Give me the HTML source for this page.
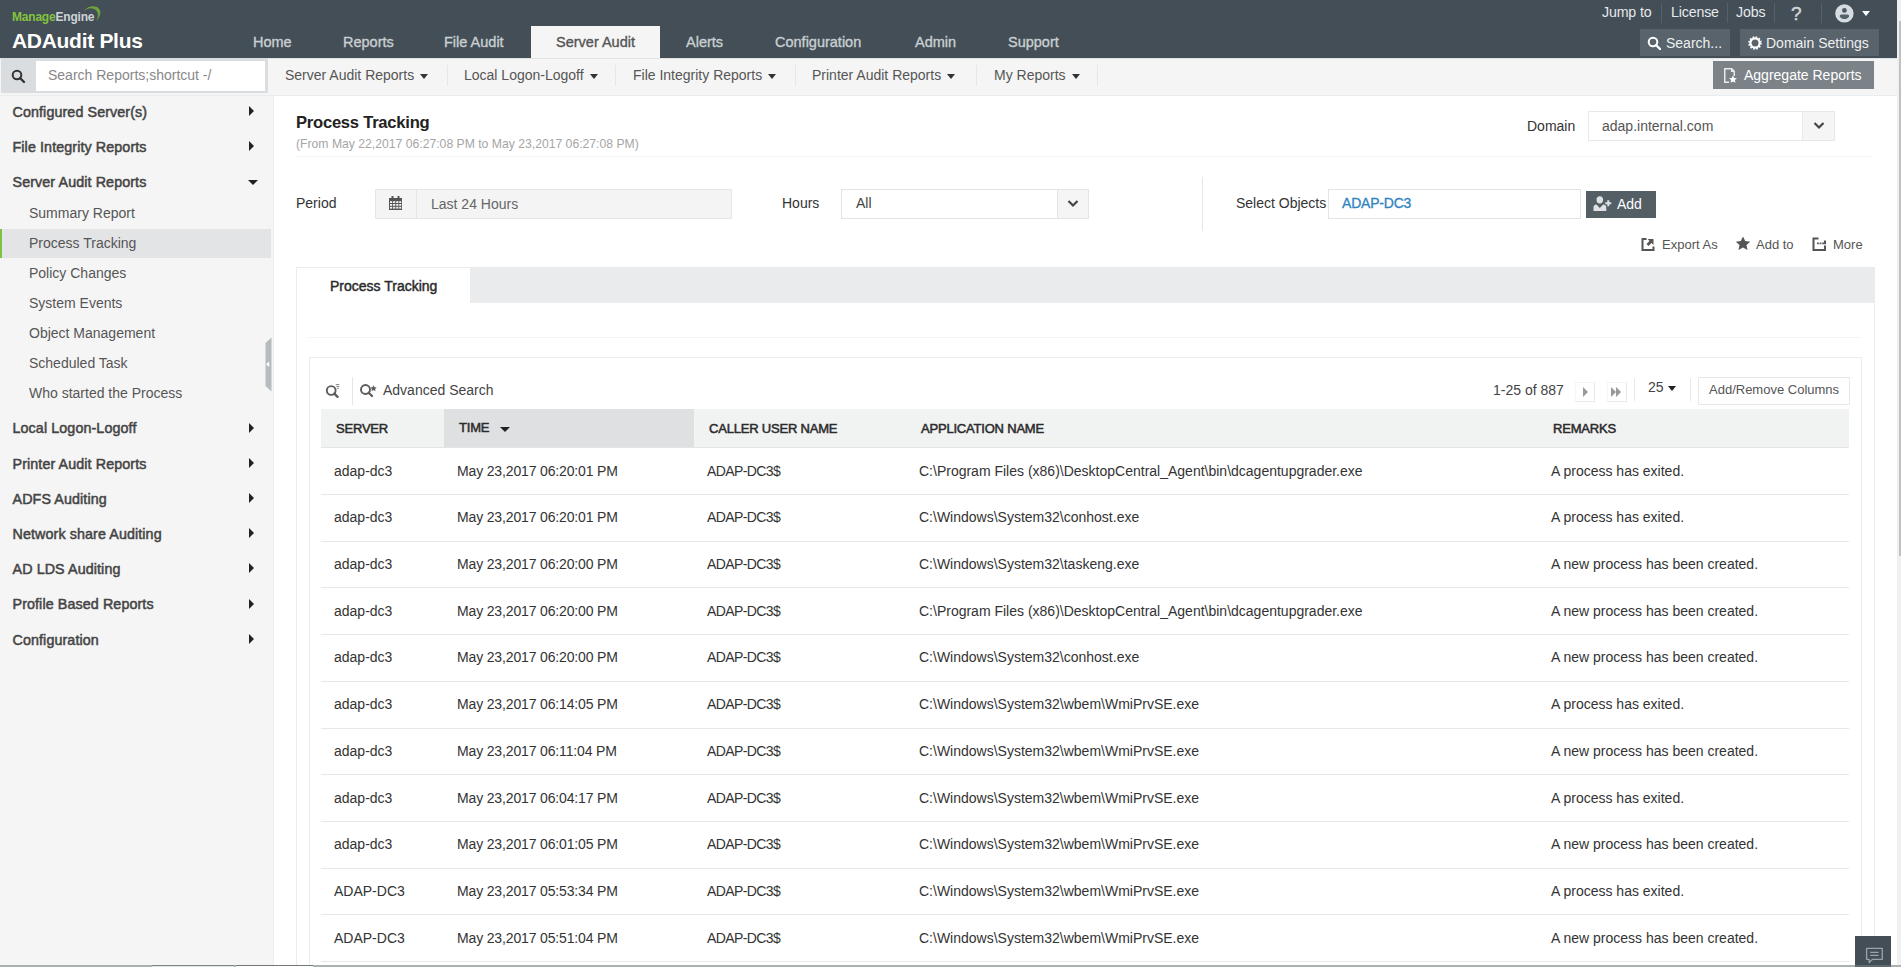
<!DOCTYPE html>
<html><head><meta charset="utf-8">
<style>
*{box-sizing:border-box;margin:0;padding:0}
html,body{width:1901px;height:967px;overflow:hidden;background:#fff;font-family:"Liberation Sans",sans-serif;color:#333}
.a{position:absolute}
.t{position:absolute;white-space:nowrap;line-height:20px;height:20px}
#hdr{left:0;top:0;width:1897px;height:58px;background:#434e56}
.nav{color:#c9ced2;font-size:14.5px;top:31.5px;-webkit-text-stroke:0.35px #c9ced2}
.tr{color:#e6e9eb;font-size:14.2px;top:2px;letter-spacing:-0.15px}
.sep{position:absolute;width:1px;background:#56616a}
#sub{left:0;top:58px;width:1897px;height:38px;background:#f5f5f5;border-bottom:1px solid #eaeded;border-top:1px solid #e0e3e4}
.dd{font-size:14px;color:#555;top:65px}
.car{display:inline-block;width:0;height:0;border-left:4.5px solid transparent;border-right:4.5px solid transparent;border-top:5px solid #333;vertical-align:middle;margin-left:6px;position:relative;top:0.5px}
.vsep{position:absolute;width:1px;background:#e4e8e8;top:65px;height:21px}
#side{left:0;top:96px;width:274px;height:871px;background:#f5f5f5;border-right:1px solid #ededed}
.si{font-size:14.3px;font-weight:normal;color:#444;left:12.5px;letter-spacing:0.1px;-webkit-text-stroke:0.5px #444}
.ss{font-size:14px;color:#555;left:29px}
.th{font-size:13px;font-weight:normal;color:#2b2b2b;letter-spacing:-0.2px;-webkit-text-stroke:0.5px #2b2b2b}
.td{font-size:14px;color:#333}
.rar{position:absolute;left:249px;width:0;height:0;border-top:5px solid transparent;border-bottom:5px solid transparent;border-left:5px solid #222}
</style></head><body>
<!-- HEADER -->
<div id="hdr" class="a"></div>
<div class="t" style="left:12px;top:8px;font-size:12px;font-weight:bold;line-height:18px;letter-spacing:-0.2px"><span style="color:#84c340">Manage</span><span style="color:#cfd3d6">Engine</span></div>
<svg class="a" style="left:80px;top:4px" width="24" height="20" viewBox="0 0 24 20"><path d="M3.2 8.2 C6 3, 12 1, 16.5 2.8 C21 5, 22.5 10, 16.2 17.2 C19 11.5, 18.5 7, 14 5 C10 3.3, 6 5, 3.2 8.2Z" fill="#6ca33c"/></svg>
<div class="t" style="left:12px;top:29px;font-size:21px;font-weight:bold;color:#fff;line-height:24px;height:24px;letter-spacing:-0.3px">ADAudit Plus</div>
<div class="a" style="left:531px;top:26px;width:129px;height:32px;background:#f5f5f5"></div>
<div class="t nav" style="left:253px">Home</div>
<div class="t nav" style="left:343px">Reports</div>
<div class="t nav" style="left:444px">File Audit</div>
<div class="t nav" style="left:556px;color:#555;-webkit-text-stroke:0.35px #555">Server Audit</div>
<div class="t nav" style="left:686px">Alerts</div>
<div class="t nav" style="left:775px">Configuration</div>
<div class="t nav" style="left:915px">Admin</div>
<div class="t nav" style="left:1008px">Support</div>
<div class="t tr" style="left:1602px">Jump to</div>
<div class="sep" style="left:1661px;top:3px;height:20px"></div>
<div class="t tr" style="left:1671px">License</div>
<div class="sep" style="left:1727px;top:3px;height:20px"></div>
<div class="t tr" style="left:1736px">Jobs</div>
<div class="sep" style="left:1774px;top:3px;height:20px"></div>
<div class="t tr" style="left:1791px;top:3px;font-size:19px;line-height:22px;height:22px;color:#cfd4d7;-webkit-text-stroke:0.5px #cfd4d7">?</div>
<div class="sep" style="left:1821px;top:3px;height:20px"></div>
<svg class="a" style="left:1835px;top:4px" width="19" height="19" viewBox="0 0 19 19"><circle cx="9.4" cy="9.4" r="9.2" fill="#d6dcdf"/><circle cx="9.4" cy="6.4" r="2.4" fill="#4f5b63"/><path d="M4.6 12.2 Q4.6 10.6 6.5 10.6 H12.3 Q14.2 10.6 14.2 12.2 Q12.8 15 9.4 15 Q6 15 4.6 12.2Z" fill="#56626a"/></svg>
<div class="a" style="left:1862px;top:11px;width:0;height:0;border-left:4.5px solid transparent;border-right:4.5px solid transparent;border-top:5px solid #fff"></div>
<div class="a" style="left:1640px;top:29px;width:90px;height:27px;background:#58636b"></div>
<svg class="a" style="left:1646.5px;top:36px" width="15" height="15" viewBox="0 0 15 15"><circle cx="6" cy="6" r="4.3" fill="none" stroke="#fff" stroke-width="2"/><path d="M9 9 L13 13" stroke="#fff" stroke-width="2.4" stroke-linecap="round"/></svg>
<div class="t" style="left:1666px;top:32.5px;font-size:14px;color:#eef0f1">Search...</div>
<div class="a" style="left:1740px;top:29px;width:139px;height:27px;background:#58636b"></div>
<svg class="a" style="left:1748px;top:36px" width="14" height="14" viewBox="0 0 14 14"><circle cx="7" cy="7" r="4.6" fill="none" stroke="#fff" stroke-width="2.2"/><circle cx="7" cy="7" r="6" fill="none" stroke="#fff" stroke-width="1.6" stroke-dasharray="1.6 1.54"/></svg>
<div class="t" style="left:1766px;top:32.5px;font-size:14px;color:#eef0f1">Domain Settings</div>
<!-- SUBNAV -->
<div id="sub" class="a"></div>
<div class="a" style="left:1px;top:58px;width:267px;height:35px;background:#d9dddf"></div>
<svg class="a" style="left:11px;top:69px" width="15" height="15" viewBox="0 0 15 15"><circle cx="6" cy="6" r="4.3" fill="none" stroke="#333" stroke-width="2"/><path d="M9 9 L13 13" stroke="#333" stroke-width="2.4" stroke-linecap="round"/></svg>
<div class="a" style="left:36px;top:61px;width:229px;height:30px;background:#fff"></div>
<div class="t" style="left:48px;top:65px;font-size:14px;color:#888">Search Reports;shortcut -/</div>
<div class="t dd" style="left:285px">Server Audit Reports<span class="car"></span></div>
<div class="vsep" style="left:447px"></div>
<div class="t dd" style="left:464px">Local Logon-Logoff<span class="car"></span></div>
<div class="vsep" style="left:615px"></div>
<div class="t dd" style="left:633px">File Integrity Reports<span class="car"></span></div>
<div class="vsep" style="left:795px"></div>
<div class="t dd" style="left:812px">Printer Audit Reports<span class="car"></span></div>
<div class="vsep" style="left:976px"></div>
<div class="t dd" style="left:994px">My Reports<span class="car"></span></div>
<div class="vsep" style="left:1097px"></div>
<div class="a" style="left:1713px;top:61px;width:161px;height:28px;background:#7b8388"></div>
<svg class="a" style="left:1722px;top:67px" width="16" height="17" viewBox="0 0 16 17"><path d="M2 1h8l3 3v5h-1.5V5H9V2.5H3.5v12H7V16H2Z" fill="#e8eaeb"/><path d="M11 8.5l1.2 2.5 2.7.3-2 1.8.6 2.7-2.5-1.4-2.5 1.4.6-2.7-2-1.8 2.7-.3Z" fill="#fff"/></svg>
<div class="t" style="left:1744px;top:65px;font-size:14px;color:#fff">Aggregate Reports</div>
<!-- SIDEBAR -->
<div id="side" class="a"></div>
<div class="a" style="left:0;top:229px;width:271px;height:29px;background:#e3e4e5"></div>
<div class="a" style="left:0;top:229px;width:2px;height:29px;background:#7dc242"></div>
<div class="t si" style="top:102px">Configured Server(s)</div><div class="rar" style="top:106px"></div>
<div class="t si" style="top:137px">File Integrity Reports</div><div class="rar" style="top:141px"></div>
<div class="t si" style="top:172px">Server Audit Reports</div><div class="a" style="left:248px;top:180px;width:0;height:0;border-left:5px solid transparent;border-right:5px solid transparent;border-top:5px solid #222"></div>
<div class="t ss" style="top:203px">Summary Report</div>
<div class="t ss" style="top:233px">Process Tracking</div>
<div class="t ss" style="top:263px">Policy Changes</div>
<div class="t ss" style="top:293px">System Events</div>
<div class="t ss" style="top:323px">Object Management</div>
<div class="t ss" style="top:353px">Scheduled Task</div>
<div class="t ss" style="top:383px">Who started the Process</div>
<div class="t si" style="top:418px">Local Logon-Logoff</div><div class="rar" style="top:423px"></div>
<div class="t si" style="top:454px">Printer Audit Reports</div><div class="rar" style="top:458px"></div>
<div class="t si" style="top:489px">ADFS Auditing</div><div class="rar" style="top:493px"></div>
<div class="t si" style="top:524px">Network share Auditing</div><div class="rar" style="top:528px"></div>
<div class="t si" style="top:559px">AD LDS Auditing</div><div class="rar" style="top:563px"></div>
<div class="t si" style="top:594px">Profile Based Reports</div><div class="rar" style="top:599px"></div>
<div class="t si" style="top:630px">Configuration</div><div class="rar" style="top:634px"></div>
<svg class="a" style="left:264.5px;top:337px" width="7" height="55" viewBox="0 0 7 55"><path d="M6.5 0.5 V54.5 L0.5 49 V6Z" fill="#b6bbbe"/><path d="M4.2 24.5 L1 27.3 L4.2 30Z" fill="#fff"/></svg>
<!-- MAIN -->
<div class="t" style="left:296px;top:111.5px;font-size:16.6px;font-weight:bold;color:#222;line-height:22px;height:22px;letter-spacing:-0.25px">Process Tracking</div>
<div class="t" style="left:296px;top:136px;font-size:12.2px;color:#a6a6a6;line-height:16px;height:16px">(From May 22,2017 06:27:08 PM to May 23,2017 06:27:08 PM)</div>
<div class="a" style="left:296px;top:156px;width:1577px;height:1px;background:#f3f3f3"></div>
<div class="t" style="left:1527px;top:116px;font-size:14px;color:#333">Domain</div>
<div class="a" style="left:1588px;top:111px;width:247px;height:30px;border:1px solid #e6e9e9;background:#fff"></div>
<div class="a" style="left:1802px;top:112px;width:32px;height:28px;background:#f5f5f5;border-left:1px solid #e6e9e9"></div>
<svg class="a" style="left:1813px;top:121px" width="12" height="9" viewBox="0 0 12 9"><path d="M1.5 2 L6 6.5 L10.5 2" fill="none" stroke="#444" stroke-width="2.2"/></svg>
<div class="t" style="left:1602px;top:116px;font-size:14px;color:#555">adap.internal.com</div>
<div class="t" style="left:296px;top:193px;font-size:14px;color:#333">Period</div>
<div class="a" style="left:375px;top:189px;width:357px;height:30px;border:1px solid #e6e6e6;background:#f4f4f4"></div>
<div class="a" style="left:416px;top:190px;width:1px;height:28px;background:#e6e6e6"></div>
<svg class="a" style="left:389px;top:196px" width="13" height="14" viewBox="0 0 13 14"><rect x="0" y="2" width="13" height="12" fill="#555"/><rect x="2.5" y="0" width="2" height="3.5" fill="#555"/><rect x="8.5" y="0" width="2" height="3.5" fill="#555"/><g fill="#f4f4f4"><rect x="1" y="5.2" width="2.2" height="1.8"/><rect x="4.1" y="5.2" width="2.2" height="1.8"/><rect x="7.2" y="5.2" width="2.2" height="1.8"/><rect x="10.2" y="5.2" width="2" height="1.8"/><rect x="1" y="8" width="2.2" height="1.8"/><rect x="4.1" y="8" width="2.2" height="1.8"/><rect x="7.2" y="8" width="2.2" height="1.8"/><rect x="10.2" y="8" width="2" height="1.8"/><rect x="1" y="10.8" width="2.2" height="1.8"/><rect x="4.1" y="10.8" width="2.2" height="1.8"/><rect x="7.2" y="10.8" width="2.2" height="1.8"/><rect x="10.2" y="10.8" width="2" height="1.8"/></g></svg>
<div class="t" style="left:431px;top:194px;font-size:14px;color:#666">Last 24 Hours</div>
<div class="t" style="left:782px;top:193px;font-size:14px;color:#333">Hours</div>
<div class="a" style="left:841px;top:189px;width:248px;height:30px;border:1px solid #e3e3e3;background:#fff"></div>
<div class="a" style="left:1057px;top:190px;width:31px;height:28px;background:#f5f5f5;border-left:1px solid #e3e3e3"></div>
<svg class="a" style="left:1067px;top:199px" width="12" height="9" viewBox="0 0 12 9"><path d="M1.5 2 L6 6.5 L10.5 2" fill="none" stroke="#444" stroke-width="2.2"/></svg>
<div class="t" style="left:856px;top:193px;font-size:14px;color:#444">All</div>
<div class="a" style="left:1202px;top:177px;width:1px;height:54px;background:#e8e8e8"></div>
<div class="t" style="left:1236px;top:193px;font-size:14px;color:#333">Select Objects</div>
<div class="a" style="left:1328px;top:189px;width:253px;height:30px;border:1px solid #e3e3e3;background:#fff"></div>
<div class="t" style="left:1342px;top:192.5px;font-size:14px;color:#2f83c0;-webkit-text-stroke:0.3px #2f83c0;letter-spacing:-0.2px">ADAP-DC3</div>
<div class="a" style="left:1586px;top:191px;width:70px;height:27px;background:#535e65"></div>
<svg class="a" style="left:1593px;top:196px" width="20" height="16" viewBox="0 0 20 16"><ellipse cx="6.8" cy="3.8" rx="3.3" ry="3.6" fill="#dfe2e4"/><path d="M0.5 15 V11.5 Q0.5 9 3.5 8.6 L6.8 12 L10.2 8.6 Q13.3 9 13.3 11.5 V15Z" fill="#dfe2e4"/><path d="M15.3 4.3v6M12.3 7.3h6" stroke="#dfe2e4" stroke-width="2"/></svg>
<div class="t" style="left:1617px;top:194px;font-size:14px;color:#fff">Add</div>
<svg class="a" style="left:1641px;top:237px" width="15" height="15" viewBox="0 0 15 15"><path d="M0.5 1h5v2H2.5v9h9V9.5h2v4.5H0.5Z" fill="#555"/><path d="M6.5 2h6v6l-2-2-3 3-2-2 3-3Z" fill="#555"/></svg>
<div class="t" style="left:1662px;top:235px;font-size:13px;color:#555">Export As</div>
<svg class="a" style="left:1735px;top:236px" width="16" height="15" viewBox="0 0 16 15"><path d="M8 0.5l2.2 4.6 5 .6-3.7 3.4 1 5L8 11.6 3.5 14.1l1-5L.8 5.7l5-.6Z" fill="#555"/></svg>
<div class="t" style="left:1756px;top:235px;font-size:13px;color:#555">Add to</div>
<svg class="a" style="left:1812px;top:237px" width="15" height="15" viewBox="0 0 15 15"><path d="M0.5 0.5h6v2H2.5v9.5h9.5V8.5h2v5.5H0.5Z" fill="#555"/><path d="M5 5.5h1.8v1.8H5zM7.6 5.5h1.8v1.8H7.6zM10.2 5.5h1.8v1.8h-1.8zM12 3.5h2v3.8h-2z" fill="#555"/></svg>
<div class="t" style="left:1833px;top:235px;font-size:13px;color:#555">More</div>
<div class="a" style="left:296px;top:267px;width:1579px;height:36px;background:#e9ebec"></div>
<div class="a" style="left:296px;top:267px;width:174px;height:37px;background:#fff;border-top:1px solid #ececec;border-left:1px solid #ececec"></div>
<div class="t" style="left:330px;top:276px;font-size:14px;color:#2b2b2b;-webkit-text-stroke:0.45px #2b2b2b">Process Tracking</div>
<div class="a" style="left:296px;top:303px;width:1px;height:664px;background:#ececec"></div>
<div class="a" style="left:1874px;top:303px;width:1px;height:664px;background:#eceeee"></div>
<div class="a" style="left:309px;top:337px;width:1552px;height:1px;background:#f3f3f3"></div>
<div class="a" style="left:309px;top:357px;width:1553px;height:610px;border:1px solid #ececec;border-bottom:none"></div>
<!-- TABLE -->
<svg class="a" style="left:325px;top:382px" width="17" height="17" viewBox="0 0 17 17"><circle cx="6.2" cy="8.5" r="4.4" fill="none" stroke="#5c5c5c" stroke-width="1.9"/><path d="M9.3 11.6 L12.6 14.9" stroke="#5c5c5c" stroke-width="2.3" stroke-linecap="round"/><path d="M10.8 2.6h3.6M11.4 4.5h3M11.8 6.3h2" stroke="#777" stroke-width="0.9"/></svg>
<div class="a" style="left:352px;top:377px;width:1px;height:28px;background:#e6e6e6"></div>
<svg class="a" style="left:359px;top:383px" width="19" height="16" viewBox="0 0 19 16"><circle cx="6.5" cy="6.5" r="4.5" fill="none" stroke="#5c5c5c" stroke-width="1.9"/><path d="M9.7 9.7 L13 13" stroke="#5c5c5c" stroke-width="2.3" stroke-linecap="round"/><path d="M14.5 2.2l1 2 2.2.3-1.6 1.5.4 2.2-2-1.1-2 1.1.4-2.2-1.6-1.5 2.2-.3Z" fill="#5c5c5c"/></svg>
<div class="t" style="left:383px;top:380px;font-size:14px;color:#444">Advanced Search</div>
<div class="t" style="left:1493px;top:380px;font-size:14px;color:#444">1-25 of 887</div>
<div class="a" style="left:1575px;top:382px;width:20px;height:20px;border:1px solid #e8eaea;border-left-color:#f4f5f5;border-top-color:#f4f5f5"></div>
<div class="a" style="left:1583px;top:387px;width:0;height:0;border-top:5px solid transparent;border-bottom:5px solid transparent;border-left:5px solid #999"></div>
<div class="a" style="left:1607px;top:382px;width:20px;height:20px;border:1px solid #e8eaea;border-left-color:#f4f5f5;border-top-color:#f4f5f5"></div>
<div class="a" style="left:1611px;top:387px;width:0;height:0;border-top:5px solid transparent;border-bottom:5px solid transparent;border-left:5px solid #999"></div>
<div class="a" style="left:1616px;top:387px;width:0;height:0;border-top:5px solid transparent;border-bottom:5px solid transparent;border-left:5px solid #999"></div>
<div class="a" style="left:1634px;top:378px;width:1px;height:23px;background:#e6e9e9"></div>
<div class="t" style="left:1648px;top:377px;font-size:14px;color:#444">25<span class="car" style="border-top-color:#222;margin-left:4px"></span></div>
<div class="a" style="left:1690px;top:378px;width:1px;height:23px;background:#e6e9e9"></div>
<div class="a" style="left:1698px;top:377px;width:152px;height:28px;border:1px solid #e6e9e9;background:#fff"></div>
<div class="t" style="left:1709px;top:380px;font-size:13px;color:#555">Add/Remove Columns</div>
<div class="a" style="left:321px;top:409px;width:1528px;height:39px;background:#f1f2f2;border-bottom:1px solid #e4e4e4"></div>
<div class="a" style="left:444px;top:409px;width:250px;height:38px;background:#dfe0e1"></div>
<div class="t th" style="left:336px;top:418.7px">SERVER</div>
<div class="t th" style="left:459px;top:417.5px">TIME<span class="car" style="border-top-color:#222;margin-left:11px;border-left-width:5px;border-right-width:5px;border-top-width:5px;top:1px;-webkit-text-stroke:0"></span></div>
<div class="t th" style="left:709px;top:418.7px">CALLER USER NAME</div>
<div class="t th" style="left:921px;top:418.7px">APPLICATION NAME</div>
<div class="t th" style="left:1553px;top:418.7px">REMARKS</div>
<div class="t td" style="left:334px;top:460.6px">adap-dc3</div><div class="t td" style="left:457px;top:460.6px;letter-spacing:-0.15px">May 23,2017 06:20:01 PM</div><div class="t td" style="left:707px;top:460.6px;letter-spacing:-0.6px">ADAP-DC3$</div><div class="t td" style="left:919px;top:460.6px">C:\Program Files (x86)\DesktopCentral_Agent\bin\dcagentupgrader.exe</div><div class="t td" style="left:1551px;top:460.6px">A process has exited.</div>
<div class="a" style="left:321px;top:494px;width:1528px;height:1px;background:#e8e8e8"></div>
<div class="t td" style="left:334px;top:507.3px">adap-dc3</div><div class="t td" style="left:457px;top:507.3px;letter-spacing:-0.15px">May 23,2017 06:20:01 PM</div><div class="t td" style="left:707px;top:507.3px;letter-spacing:-0.6px">ADAP-DC3$</div><div class="t td" style="left:919px;top:507.3px">C:\Windows\System32\conhost.exe</div><div class="t td" style="left:1551px;top:507.3px">A process has exited.</div>
<div class="a" style="left:321px;top:541px;width:1528px;height:1px;background:#e8e8e8"></div>
<div class="t td" style="left:334px;top:554.0px">adap-dc3</div><div class="t td" style="left:457px;top:554.0px;letter-spacing:-0.15px">May 23,2017 06:20:00 PM</div><div class="t td" style="left:707px;top:554.0px;letter-spacing:-0.6px">ADAP-DC3$</div><div class="t td" style="left:919px;top:554.0px">C:\Windows\System32\taskeng.exe</div><div class="t td" style="left:1551px;top:554.0px">A new process has been created.</div>
<div class="a" style="left:321px;top:587px;width:1528px;height:1px;background:#e8e8e8"></div>
<div class="t td" style="left:334px;top:600.7px">adap-dc3</div><div class="t td" style="left:457px;top:600.7px;letter-spacing:-0.15px">May 23,2017 06:20:00 PM</div><div class="t td" style="left:707px;top:600.7px;letter-spacing:-0.6px">ADAP-DC3$</div><div class="t td" style="left:919px;top:600.7px">C:\Program Files (x86)\DesktopCentral_Agent\bin\dcagentupgrader.exe</div><div class="t td" style="left:1551px;top:600.7px">A new process has been created.</div>
<div class="a" style="left:321px;top:634px;width:1528px;height:1px;background:#e8e8e8"></div>
<div class="t td" style="left:334px;top:647.4px">adap-dc3</div><div class="t td" style="left:457px;top:647.4px;letter-spacing:-0.15px">May 23,2017 06:20:00 PM</div><div class="t td" style="left:707px;top:647.4px;letter-spacing:-0.6px">ADAP-DC3$</div><div class="t td" style="left:919px;top:647.4px">C:\Windows\System32\conhost.exe</div><div class="t td" style="left:1551px;top:647.4px">A new process has been created.</div>
<div class="a" style="left:321px;top:681px;width:1528px;height:1px;background:#e8e8e8"></div>
<div class="t td" style="left:334px;top:694.1px">adap-dc3</div><div class="t td" style="left:457px;top:694.1px;letter-spacing:-0.15px">May 23,2017 06:14:05 PM</div><div class="t td" style="left:707px;top:694.1px;letter-spacing:-0.6px">ADAP-DC3$</div><div class="t td" style="left:919px;top:694.1px">C:\Windows\System32\wbem\WmiPrvSE.exe</div><div class="t td" style="left:1551px;top:694.1px">A process has exited.</div>
<div class="a" style="left:321px;top:728px;width:1528px;height:1px;background:#e8e8e8"></div>
<div class="t td" style="left:334px;top:740.8px">adap-dc3</div><div class="t td" style="left:457px;top:740.8px;letter-spacing:-0.15px">May 23,2017 06:11:04 PM</div><div class="t td" style="left:707px;top:740.8px;letter-spacing:-0.6px">ADAP-DC3$</div><div class="t td" style="left:919px;top:740.8px">C:\Windows\System32\wbem\WmiPrvSE.exe</div><div class="t td" style="left:1551px;top:740.8px">A new process has been created.</div>
<div class="a" style="left:321px;top:774px;width:1528px;height:1px;background:#e8e8e8"></div>
<div class="t td" style="left:334px;top:787.5px">adap-dc3</div><div class="t td" style="left:457px;top:787.5px;letter-spacing:-0.15px">May 23,2017 06:04:17 PM</div><div class="t td" style="left:707px;top:787.5px;letter-spacing:-0.6px">ADAP-DC3$</div><div class="t td" style="left:919px;top:787.5px">C:\Windows\System32\wbem\WmiPrvSE.exe</div><div class="t td" style="left:1551px;top:787.5px">A process has exited.</div>
<div class="a" style="left:321px;top:821px;width:1528px;height:1px;background:#e8e8e8"></div>
<div class="t td" style="left:334px;top:834.2px">adap-dc3</div><div class="t td" style="left:457px;top:834.2px;letter-spacing:-0.15px">May 23,2017 06:01:05 PM</div><div class="t td" style="left:707px;top:834.2px;letter-spacing:-0.6px">ADAP-DC3$</div><div class="t td" style="left:919px;top:834.2px">C:\Windows\System32\wbem\WmiPrvSE.exe</div><div class="t td" style="left:1551px;top:834.2px">A new process has been created.</div>
<div class="a" style="left:321px;top:868px;width:1528px;height:1px;background:#e8e8e8"></div>
<div class="t td" style="left:334px;top:880.9px">ADAP-DC3</div><div class="t td" style="left:457px;top:880.9px;letter-spacing:-0.15px">May 23,2017 05:53:34 PM</div><div class="t td" style="left:707px;top:880.9px;letter-spacing:-0.6px">ADAP-DC3$</div><div class="t td" style="left:919px;top:880.9px">C:\Windows\System32\wbem\WmiPrvSE.exe</div><div class="t td" style="left:1551px;top:880.9px">A process has exited.</div>
<div class="a" style="left:321px;top:914px;width:1528px;height:1px;background:#e8e8e8"></div>
<div class="t td" style="left:334px;top:927.6px">ADAP-DC3</div><div class="t td" style="left:457px;top:927.6px;letter-spacing:-0.15px">May 23,2017 05:51:04 PM</div><div class="t td" style="left:707px;top:927.6px;letter-spacing:-0.6px">ADAP-DC3$</div><div class="t td" style="left:919px;top:927.6px">C:\Windows\System32\wbem\WmiPrvSE.exe</div><div class="t td" style="left:1551px;top:927.6px">A new process has been created.</div>
<div class="a" style="left:321px;top:961px;width:1528px;height:1px;background:#e8e8e8"></div>
<div class="a" style="left:1855px;top:936px;width:36px;height:29px;background:#434e56"></div>
<svg class="a" style="left:1865px;top:947px" width="19" height="17" viewBox="0 0 19 17"><path d="M1.6 1.3 H17.3 V12.3 H7.5 L4.2 15.6 V12.3 H1.6Z" fill="none" stroke="#9ca3a8" stroke-width="1.3" stroke-linejoin="round"/><path d="M5.3 5.3h8.2M5.3 8.3h8.2" stroke="#9ca3a8" stroke-width="1.3"/></svg>
<div class="a" style="left:1897px;top:0;width:4px;height:967px;background:#f0f0f0"></div>
<div class="a" style="left:1899px;top:21px;width:2px;height:535px;background:#c1c1c1"></div>
<div class="a" style="left:0;top:965px;width:1901px;height:2px;background:#a9b1b1"></div><div class="a" style="left:1855px;top:965px;width:36px;height:2px;background:#5f6b6e"></div><div class="a" style="left:152px;top:965px;width:82px;height:2px;background:#dfe3e3;border-top:1px solid #7d8586"></div><div class="a" style="left:236px;top:965px;width:77px;height:2px;background:#fff;border-top:1px solid #6f7778"></div>
</body></html>
